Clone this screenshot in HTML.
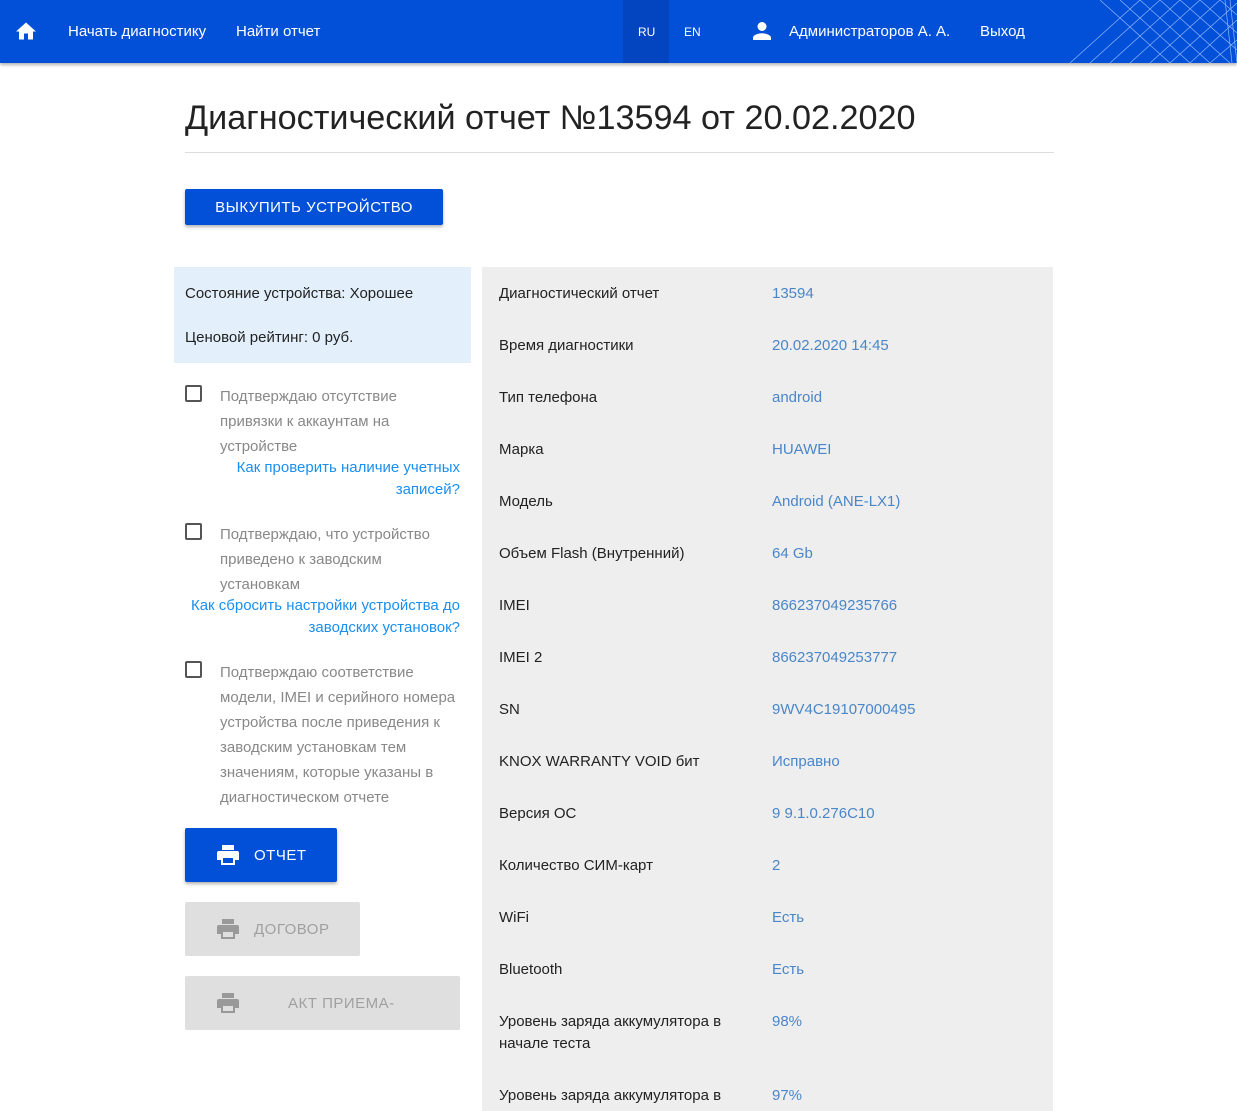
<!DOCTYPE html><html><head><meta charset="utf-8"><style>
body{margin:0;font-family:"Liberation Sans",sans-serif;background:#fff;width:1237px;height:1111px;overflow:hidden;position:relative;color:#222}
.nav{position:absolute;left:0;top:0;width:1237px;height:63px;background:#0250d8;box-shadow:0 2px 3px rgba(0,0,0,.3);color:#fff;font-size:15px;overflow:hidden}
.nav span{position:absolute;top:23px}
.a{position:absolute}
h1{position:absolute;left:185px;top:99px;margin:0;font-weight:normal;font-size:34.2px;color:#222}
.hr{position:absolute;left:185px;top:152px;width:869px;height:1px;background:#ddd}
.btn{position:absolute;font-size:15px;letter-spacing:.5px;display:flex;align-items:center;border-radius:2px}
.lp{position:absolute;left:174px;top:267px;width:297px;height:96px;background:#e3f0fb;font-size:15px}
.cb{position:absolute;left:185px;width:17px;height:17px;border:2px solid #555;border-radius:2px;box-sizing:border-box}
.ct{position:absolute;left:220px;width:238px;font-size:15px;line-height:25px;color:#888}
.lk{position:absolute;right:777px;text-align:right;font-size:15px;line-height:22px;color:#1a8ff0}
.rp{position:absolute;left:482px;top:267px;width:571px;height:844px;background:#eee;font-size:15px}
.rp .l{position:absolute;left:17px}.rp .v{position:absolute;left:290px;color:#4a86c8}
</style></head><body>
<div class="nav">
<svg class="a" style="left:16px;top:22px" width="20" height="18" viewBox="0 0 20 17"><path d="M8 17v-6h4v6h5V9h3L10 0 0 9h3v8z" fill="#fff"/></svg>
<span style="left:68px">Начать диагностику</span><span style="left:236px">Найти отчет</span>
<div class="a" style="left:623px;top:0;width:46px;height:63px;background:#0345c0"></div>
<span style="left:638px;top:25px;font-size:12px">RU</span><span style="left:684px;top:25px;font-size:12px">EN</span>
<svg class="a" style="left:753px;top:22px" width="18" height="18" viewBox="0 0 16 16"><circle cx="8" cy="4" r="4" fill="#fff"/><path d="M0 16v-2c0-2.7 5.3-4 8-4s8 1.3 8 4v2z" fill="#fff"/></svg>
<span style="left:789px">Администраторов А. А.</span><span style="left:980px">Выход</span>
<svg class="a" style="left:1060px;top:0" width="177" height="63" stroke="#8fb4ff" stroke-width=".7" fill="none">
<path d="M10 63L80 0M30 63L100 0M50 63L120 0M70 63L140 0M90 63L160 0M110 63L177 3M130 63L177 20M150 63L177 40M40 0L110 63M60 0L130 63M80 0L150 63M100 0L170 63M120 0L177 50M140 0L177 33M160 0L177 15M170 0L177 63M165 0L172 63"/></svg>
</div>
<h1>Диагностический отчет №13594 от 20.02.2020</h1><div class="hr"></div>
<div class="btn" style="left:185px;top:189px;width:258px;height:36px;background:#0250d8;color:#fff;justify-content:center;box-shadow:0 2px 3px rgba(0,0,0,.3)">ВЫКУПИТЬ УСТРОЙСТВО</div>
<div class="lp"><div class="a" style="left:11px;top:18px">Состояние устройства: Хорошее</div><div class="a" style="left:11px;top:62px">Ценовой рейтинг: 0 руб.</div></div>
<div class="cb" style="top:385px"></div><div class="ct" style="top:384px">Подтверждаю отсутствие привязки к аккаунтам на устройстве</div>
<div class="lk" style="top:457px">Как проверить наличие учетных<br>записей?</div>
<div class="cb" style="top:523px"></div><div class="ct" style="top:522px">Подтверждаю, что устройство приведено к заводским установкам</div>
<div class="lk" style="top:595px">Как сбросить настройки устройства до<br>заводских установок?</div>
<div class="cb" style="top:661px"></div><div class="ct" style="top:660px">Подтверждаю соответствие модели, IMEI и серийного номера устройства после приведения к заводским установкам тем значениям, которые указаны в диагностическом отчете</div>
<div class="btn" style="left:185px;top:828px;width:152px;height:54px;background:#0250d8;color:#fff;box-shadow:0 2px 3px rgba(0,0,0,.3)"><svg style="margin-left:32px;margin-right:15px" width="22" height="20" viewBox="0 0 22 20"><path d="M5 0h12v5H5zM2 6h18a2 2 0 012 2v7h-4v5H4v-5H0V8a2 2 0 012-2zM6 13v5h10v-5z" fill="#fff"/></svg>ОТЧЕТ</div>
<div class="btn" style="left:185px;top:902px;width:175px;height:54px;background:#dfdfdf;color:#a0a0a0"><svg style="margin-left:32px;margin-right:15px" width="22" height="20" viewBox="0 0 22 20"><path d="M5 0h12v5H5zM2 6h18a2 2 0 012 2v7h-4v5H4v-5H0V8a2 2 0 012-2zM6 13v5h10v-5z" fill="#999"/></svg>ДОГОВОР</div>
<div class="btn" style="left:185px;top:976px;width:275px;height:54px;background:#dfdfdf;color:#a0a0a0"><svg style="margin-left:32px;margin-right:49px" width="22" height="20" viewBox="0 0 22 20"><path d="M5 0h12v5H5zM2 6h18a2 2 0 012 2v7h-4v5H4v-5H0V8a2 2 0 012-2zM6 13v5h10v-5z" fill="#999"/></svg>АКТ ПРИЕМА-</div>
<div class="rp">
<div class="l" style="top:18px">Диагностический отчет</div><div class="v" style="top:18px">13594</div>
<div class="l" style="top:70px">Время диагностики</div><div class="v" style="top:70px">20.02.2020 14:45</div>
<div class="l" style="top:122px">Тип телефона</div><div class="v" style="top:122px">android</div>
<div class="l" style="top:174px">Марка</div><div class="v" style="top:174px">HUAWEI</div>
<div class="l" style="top:226px">Модель</div><div class="v" style="top:226px">Android (ANE-LX1)</div>
<div class="l" style="top:278px">Объем Flash (Внутренний)</div><div class="v" style="top:278px">64 Gb</div>
<div class="l" style="top:330px">IMEI</div><div class="v" style="top:330px">866237049235766</div>
<div class="l" style="top:382px">IMEI 2</div><div class="v" style="top:382px">866237049253777</div>
<div class="l" style="top:434px">SN</div><div class="v" style="top:434px">9WV4C19107000495</div>
<div class="l" style="top:486px">KNOX WARRANTY VOID бит</div><div class="v" style="top:486px">Исправно</div>
<div class="l" style="top:538px">Версия ОС</div><div class="v" style="top:538px">9 9.1.0.276C10</div>
<div class="l" style="top:590px">Количество СИМ-карт</div><div class="v" style="top:590px">2</div>
<div class="l" style="top:642px">WiFi</div><div class="v" style="top:642px">Есть</div>
<div class="l" style="top:694px">Bluetooth</div><div class="v" style="top:694px">Есть</div>
<div class="l" style="top:744px;line-height:22px">Уровень заряда аккумулятора в<br>начале теста</div><div class="v" style="top:744px;line-height:22px">98%</div>
<div class="l" style="top:818px;line-height:22px">Уровень заряда аккумулятора в</div><div class="v" style="top:818px;line-height:22px">97%</div>
</div>
</body></html>
